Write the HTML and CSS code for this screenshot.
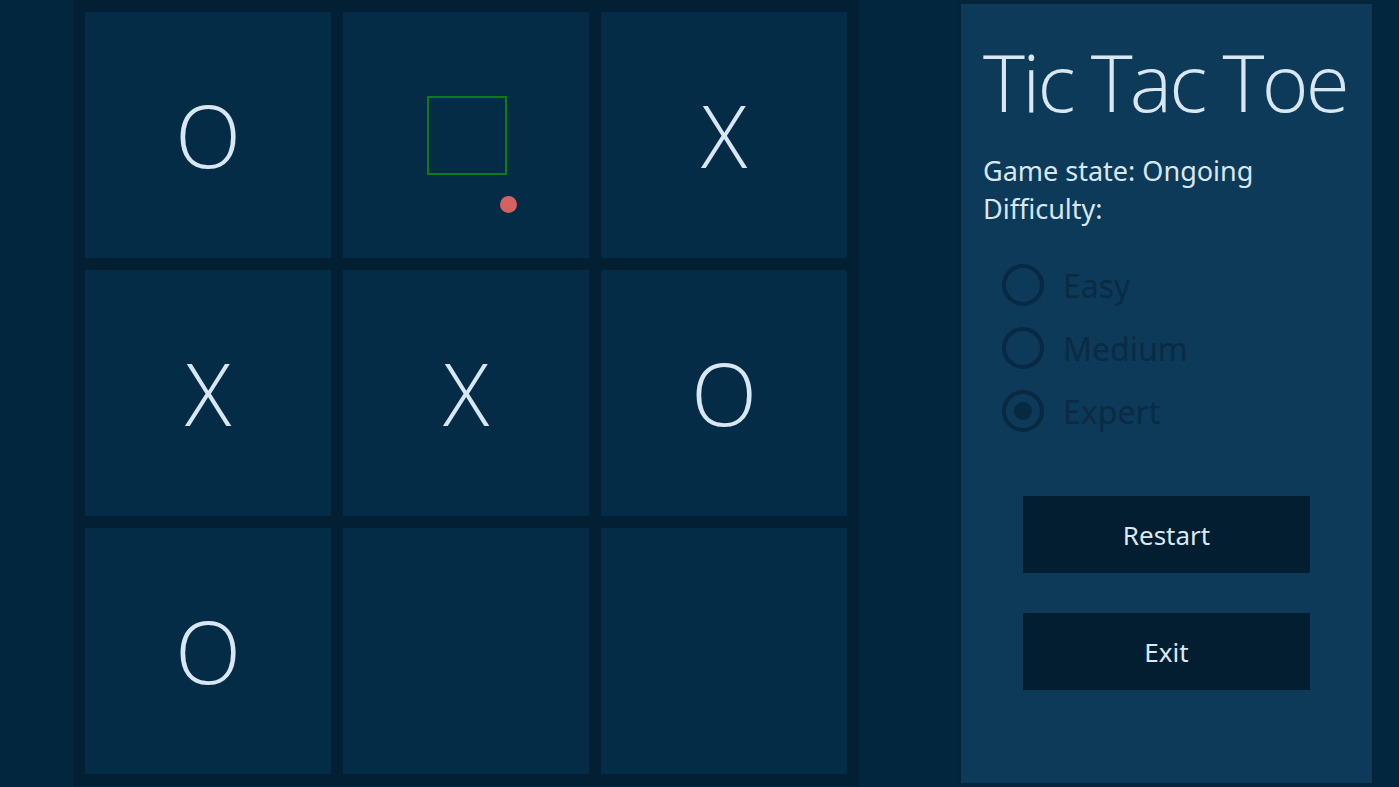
FILE: index.html
```html
<!DOCTYPE html>
<html lang="en">

<head>
    <meta charset="UTF-8">
    <meta name="viewport" content="width=device-width, initial-scale=1.0">
    <title>Tic Tac Toe</title>
    <link rel="stylesheet" href="styles.css">
</head>
<body>
    <div class="board">
        <div class="cell">O</div>
        <div class="cell">
            <div class="hover-box"></div>
            <div class="cursor-dot"></div>
        </div>
        <div class="cell">X</div>
        <div class="cell">X</div>
        <div class="cell">X</div>
        <div class="cell">O</div>
        <div class="cell">O</div>
        <div class="cell"></div>
        <div class="cell"></div>
    </div>
    <div class="panel">
        <h1>Tic Tac Toe</h1>
        <div class="info">Game state: Ongoing</div>
        <div class="info">Difficulty:</div>
        <div class="options">
            <div class="option"><span class="radio"></span>Easy</div>
            <div class="option"><span class="radio"></span>Medium</div>
            <div class="option"><span class="radio checked"></span>Expert</div>
        </div>
        <div class="actions">
            <button>Restart</button>
            <button>Exit</button>
        </div>
    </div>
</body>
</html>
```

FILE: styles.css
```css
body {
    display: flex;
    align-items: flex-start;
    margin: 0;
    height: 787px;
    overflow: hidden;
    background: #03263f;
    font-family: "Noto Sans", "Open Sans", sans-serif;
    color: #d9e7f3;
}

.board {
    display: grid;
    grid-template-columns: repeat(3, 246px);
    grid-template-rows: repeat(3, 246px);
    gap: 12px;
    padding: 12px;
    margin-left: 73px;
    background: #021f33;
}

.cell {
    position: relative;
    display: flex;
    align-items: center;
    justify-content: center;
    background: #042c47;
    font-family: "Open Sans", sans-serif;
    font-weight: 300;
    font-size: 86px;
    line-height: 1;
}

.hover-box {
    position: absolute;
    left: 84px;
    top: 84px;
    width: 76px;
    height: 75px;
    border: 2px solid #0e7a1c;
}

.cursor-dot {
    position: absolute;
    left: 157px;
    top: 184px;
    width: 17px;
    height: 17px;
    border-radius: 50%;
    background: #d46262;
}

.panel {
    display: flex;
    flex-direction: column;
    width: 411px;
    height: 779px;
    margin-top: 2px;
    margin-left: 100px;
    border: 2px solid #072338;
    background: #0c3a58;
}

.panel h1 {
    margin: 37px 0 0 22px;
    font-family: "Open Sans", sans-serif;
    font-weight: 300;
    font-size: 80px;
    line-height: 1;
    letter-spacing: -2.8px;
    white-space: nowrap;
}

.info {
    margin-left: 22px;
    font-size: 27px;
    line-height: 38px;
}

.info:first-of-type {
    margin-top: 31px;
}

.options {
    display: flex;
    flex-direction: column;
    gap: 21px;
    margin: 36px 0 0 41px;
}

.option {
    display: flex;
    align-items: center;
    gap: 19px;
    height: 42px;
    font-size: 32px;
    color: #0a2b44;
}

.radio {
    display: flex;
    align-items: center;
    justify-content: center;
    box-sizing: border-box;
    width: 42px;
    height: 42px;
    border: 4px solid #072a42;
    border-radius: 50%;
}

.radio.checked::after {
    content: "";
    width: 18px;
    height: 18px;
    border-radius: 50%;
    background: #072a42;
}

.actions {
    display: flex;
    flex-direction: column;
    align-items: center;
    gap: 40px;
    margin-top: 64px;
}

button {
    width: 287px;
    height: 77px;
    border: none;
    background: #031e30;
    color: #dce8f2;
    font-family: "Noto Sans", "Open Sans", sans-serif;
    font-size: 26px;
}
```
